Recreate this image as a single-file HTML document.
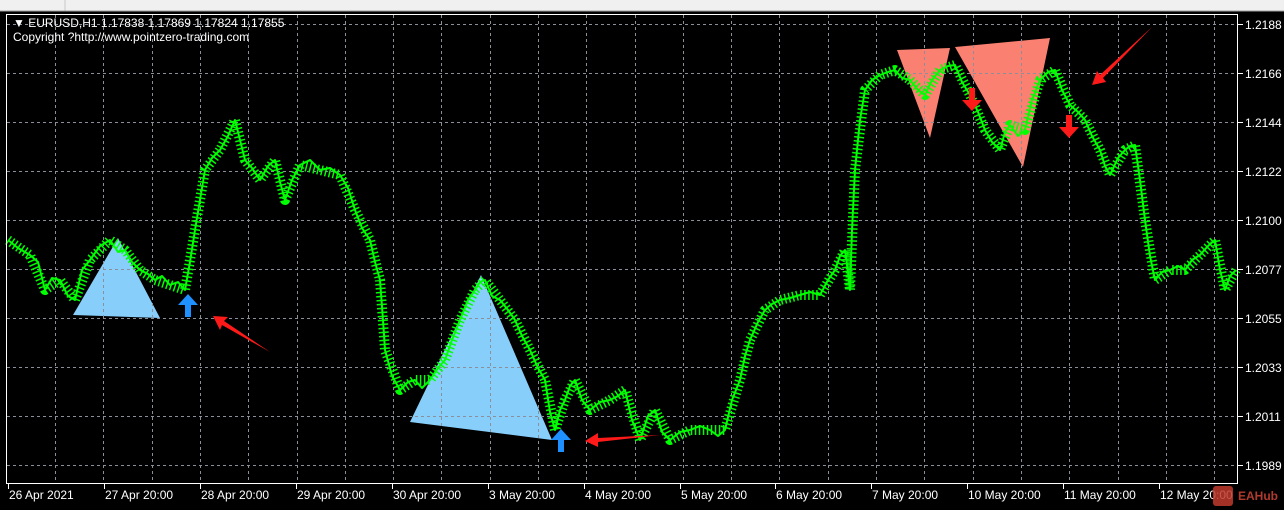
<!DOCTYPE html>
<html><head><meta charset="utf-8"><style>
html,body{margin:0;padding:0;background:#000;width:1284px;height:510px;overflow:hidden}
svg{display:block}
text{font-family:"Liberation Sans",sans-serif;font-size:12px;fill:#fff}
</style></head><body>
<svg width="1284" height="510" xmlns="http://www.w3.org/2000/svg">
<rect x="0" y="0" width="1284" height="510" fill="#000"/>
<rect x="0" y="0" width="1284" height="11" fill="#f0f0f0"/>
<line x1="65" y1="0" x2="65" y2="11" stroke="#c8c8c8"/>
<line x1="0" y1="11" x2="1284" y2="11" stroke="#a0a0a0"/>
<polygon points="73,315 118,238 160,318" fill="#87cefa"/>
<polygon points="410,422 481,275 552,440" fill="#87cefa"/>
<polygon points="897,50 950,48 930,138" fill="#fa8072"/>
<polygon points="955,47 1050,38 1023,167" fill="#fa8072"/>
<g stroke="#8a8f99" stroke-dasharray="3,3" stroke-width="1">
<line x1="55.5" y1="15" x2="55.5" y2="483"/><line x1="103.5" y1="15" x2="103.5" y2="483"/><line x1="152.5" y1="15" x2="152.5" y2="483"/><line x1="200.5" y1="15" x2="200.5" y2="483"/><line x1="248.5" y1="15" x2="248.5" y2="483"/><line x1="297.5" y1="15" x2="297.5" y2="483"/><line x1="345.5" y1="15" x2="345.5" y2="483"/><line x1="393.5" y1="15" x2="393.5" y2="483"/><line x1="441.5" y1="15" x2="441.5" y2="483"/><line x1="490.5" y1="15" x2="490.5" y2="483"/><line x1="538.5" y1="15" x2="538.5" y2="483"/><line x1="586.5" y1="15" x2="586.5" y2="483"/><line x1="635.5" y1="15" x2="635.5" y2="483"/><line x1="683.5" y1="15" x2="683.5" y2="483"/><line x1="731.5" y1="15" x2="731.5" y2="483"/><line x1="779.5" y1="15" x2="779.5" y2="483"/><line x1="828.5" y1="15" x2="828.5" y2="483"/><line x1="876.5" y1="15" x2="876.5" y2="483"/><line x1="924.5" y1="15" x2="924.5" y2="483"/><line x1="973.5" y1="15" x2="973.5" y2="483"/><line x1="1021.5" y1="15" x2="1021.5" y2="483"/><line x1="1069.5" y1="15" x2="1069.5" y2="483"/><line x1="1118.5" y1="15" x2="1118.5" y2="483"/><line x1="1166.5" y1="15" x2="1166.5" y2="483"/><line x1="1214.5" y1="15" x2="1214.5" y2="483"/>
<line x1="7" y1="24.5" x2="1237" y2="24.5"/><line x1="7" y1="73.5" x2="1237" y2="73.5"/><line x1="7" y1="122.5" x2="1237" y2="122.5"/><line x1="7" y1="171.5" x2="1237" y2="171.5"/><line x1="7" y1="220.5" x2="1237" y2="220.5"/><line x1="7" y1="269.5" x2="1237" y2="269.5"/><line x1="7" y1="318.5" x2="1237" y2="318.5"/><line x1="7" y1="367.5" x2="1237" y2="367.5"/><line x1="7" y1="416.5" x2="1237" y2="416.5"/><line x1="7" y1="465.5" x2="1237" y2="465.5"/>
</g>
<g fill="none" stroke="#00ff00" stroke-linejoin="round">
<polyline stroke-width="10" stroke-dasharray="1.5,2.5" points="8,240 30,255 45,290 60,280 75,300 90,260 110,240 125,250 140,270 155,280 170,285 185,290 195,230 205,170 220,150 235,120 245,160 260,180 275,160 285,200 300,165 320,170 340,175 355,210 370,240 380,280 385,350 400,390 415,380 430,380 445,360 460,320 475,290 485,280 500,300 515,320 530,350 545,380 555,430 565,400 575,380 590,410 610,400 625,390 640,440 655,410 670,440 690,430 710,430 725,430 740,380 750,340 765,310 780,300 800,295 820,295 835,270 845,250 850,290 855,170 865,90 880,75 895,70 910,80 925,95 940,70 955,65 970,95 985,130 1000,150 1010,125 1025,130 1040,80 1055,70 1070,105 1085,120 1100,150 1110,175 1125,150 1135,145 1145,220 1155,280 1170,270 1185,270 1200,255 1215,240 1225,290 1236,270"/>
<polyline stroke-width="2" points="8,240 18,248 30,255 38,262 45,290 52,278 60,280 68,296 75,300 82,270 90,260 100,246 110,240 118,252 125,250 132,262 140,270 148,274 155,280 162,276 170,285 178,282 185,290 190,262 195,230 200,200 205,170 212,158 220,150 228,136 235,120 240,140 245,160 252,168 260,180 268,166 275,160 280,182 285,200 292,180 300,165 310,160 320,170 330,168 340,175 348,188 355,210 362,228 370,240 375,262 380,280 383,320 385,350 392,376 400,390 408,382 415,380 422,388 430,380 438,368 445,360 452,340 460,320 468,300 475,290 480,282 485,280 492,296 500,300 508,310 515,320 522,336 530,350 538,368 545,380 550,412 555,430 560,410 565,400 570,386 575,380 582,400 590,410 600,402 610,400 618,396 625,390 632,420 640,440 648,416 655,410 662,432 670,440 680,432 690,430 700,426 710,430 718,436 725,430 732,400 740,380 745,356 750,340 758,322 765,310 772,304 780,300 790,298 800,295 810,292 820,295 828,280 835,270 840,256 845,250 848,272 850,290 852,230 855,170 860,120 865,90 872,80 880,75 888,72 895,70 902,78 910,80 918,90 925,95 932,80 940,70 948,66 955,65 962,82 970,95 978,112 985,130 992,142 1000,150 1005,132 1010,125 1018,136 1025,130 1032,100 1040,80 1048,72 1055,70 1062,90 1070,105 1078,112 1085,120 1092,136 1100,150 1105,166 1110,175 1118,158 1125,150 1130,146 1135,145 1140,180 1145,220 1150,256 1155,280 1162,272 1170,270 1178,266 1185,270 1192,260 1200,255 1208,246 1215,240 1220,270 1225,290 1230,276 1236,270"/>
</g>
<g fill="#1e90ff">
<polygon points="188,294 198,305 191,305 191,317 185,317 185,305 178,305"/>
<polygon points="561,429 571,440 564,440 564,452 558,452 558,440 551,440"/>
</g>
<g fill="#ff1a1a">
<polygon points="972,111 982,100 975,100 975,88 969,88 969,100 962,100"/>
<polygon points="1069,138 1079,127 1072,127 1072,115 1066,115 1066,127 1059,127"/>
<polygon points="213,316 228,317 224,321 270,352 222,325 220,330"/>
<polygon points="585,441 598,433 598,438 660,435 598,442 598,447"/>
<polygon points="1092,85 1097,71 1100,75 1152,27 1103,78 1106,82"/>
</g>
<rect x="6.5" y="14.5" width="1231" height="469" fill="none" stroke="#fff"/>
<g stroke="#fff">
<line x1="1238" y1="24.5" x2="1243" y2="24.5"/><line x1="1238" y1="73.5" x2="1243" y2="73.5"/><line x1="1238" y1="122.5" x2="1243" y2="122.5"/><line x1="1238" y1="171.5" x2="1243" y2="171.5"/><line x1="1238" y1="220.5" x2="1243" y2="220.5"/><line x1="1238" y1="269.5" x2="1243" y2="269.5"/><line x1="1238" y1="318.5" x2="1243" y2="318.5"/><line x1="1238" y1="367.5" x2="1243" y2="367.5"/><line x1="1238" y1="416.5" x2="1243" y2="416.5"/><line x1="1238" y1="465.5" x2="1243" y2="465.5"/>
<line x1="8.5" y1="484" x2="8.5" y2="489"/><line x1="104.5" y1="484" x2="104.5" y2="489"/><line x1="200.5" y1="484" x2="200.5" y2="489"/><line x1="296.5" y1="484" x2="296.5" y2="489"/><line x1="392.5" y1="484" x2="392.5" y2="489"/><line x1="488.5" y1="484" x2="488.5" y2="489"/><line x1="584.5" y1="484" x2="584.5" y2="489"/><line x1="680.5" y1="484" x2="680.5" y2="489"/><line x1="775.5" y1="484" x2="775.5" y2="489"/><line x1="871.5" y1="484" x2="871.5" y2="489"/><line x1="967.5" y1="484" x2="967.5" y2="489"/><line x1="1063.5" y1="484" x2="1063.5" y2="489"/><line x1="1159.5" y1="484" x2="1159.5" y2="489"/>
</g>
<text x="1245" y="29">1.2188</text><text x="1245" y="78">1.2166</text><text x="1245" y="127">1.2144</text><text x="1245" y="176">1.2122</text><text x="1245" y="225">1.2100</text><text x="1245" y="274">1.2077</text><text x="1245" y="323">1.2055</text><text x="1245" y="372">1.2033</text><text x="1245" y="421">1.2011</text><text x="1245" y="470">1.1989</text>
<text x="9" y="499">26 Apr 2021</text><text x="105" y="499">27 Apr 20:00</text><text x="201" y="499">28 Apr 20:00</text><text x="297" y="499">29 Apr 20:00</text><text x="393" y="499">30 Apr 20:00</text><text x="489" y="499">3 May 20:00</text><text x="585" y="499">4 May 20:00</text><text x="681" y="499">5 May 20:00</text><text x="776" y="499">6 May 20:00</text><text x="872" y="499">7 May 20:00</text><text x="968" y="499">10 May 20:00</text><text x="1064" y="499">11 May 20:00</text><text x="1160" y="499">12 May 20:00</text>
<text x="13" y="27">&#9660; EURUSD,H1  1.17838 1.17869 1.17824 1.17855</text>
<text x="13" y="41">Copyright ?http://www.pointzero-trading.com</text>
<rect x="1213" y="486" width="20" height="20" rx="3" fill="#c0392b" opacity="0.85"/>
<text x="1238" y="500" style="fill:#b03a2e;font-weight:bold">EAHub</text>
</svg>
</body></html>
